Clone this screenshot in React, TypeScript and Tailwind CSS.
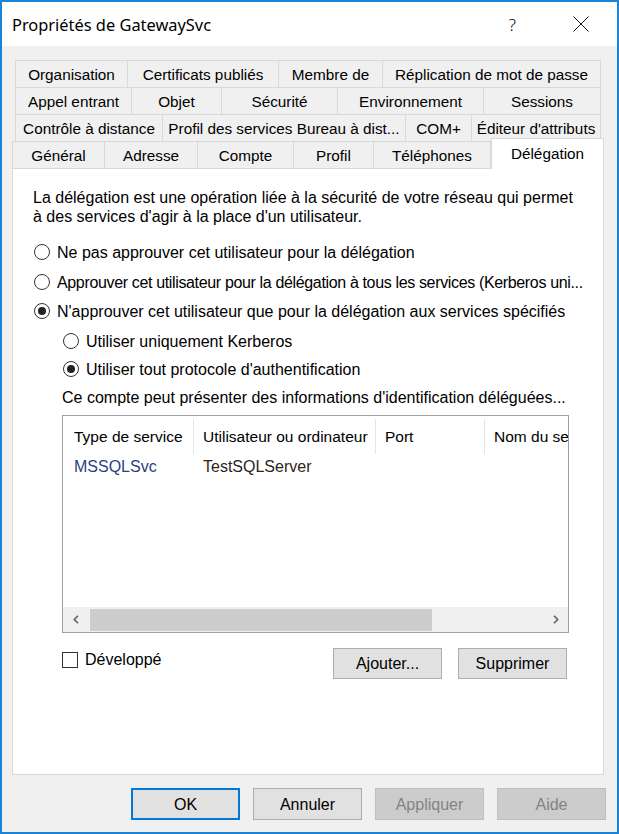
const tabRows: [string, number][][] = [
  [["Organisation", 113], ["Certificats publiés", 151], ["Membre de", 104], ["Réplication de mot de passe", 218]],
  [["Appel entrant", 117], ["Objet", 90], ["Sécurité", 116], ["Environnement", 146], ["Sessions", 117]],
  [["Contrôle à distance", 148], ["Profil des services Bureau à dist...", 243], ["COM+", 66], ["Éditeur d'attributs", 129]],
];

const frontRow: [string, number][] = [
  ["Général", 93],
  ["Adresse", 93],
  ["Compte", 96],
  ["Profil", 80],
  ["Téléphones", 117],
];

function Radio({ checked, label, tight }: { checked?: boolean; label: string; tight?: boolean }) {
  return (
    <div className="flex h-[20px] items-center">
      <span className="flex h-[16px] w-[16px] shrink-0 items-center justify-center rounded-full border border-[#333] bg-white">
        {checked && <span className="h-[8px] w-[8px] rounded-full bg-[#222]" />}
      </span>
      <span className={tight ? "ml-[7px] whitespace-nowrap tracking-[-0.35px]" : "ml-[7px] whitespace-nowrap"}>
        {label}
      </span>
    </div>
  );
}

function Button({ label, primary, disabled }: { label: string; primary?: boolean; disabled?: boolean }) {
  return (
    <div
      className={
        primary
          ? "flex h-[32px] w-[109px] items-center justify-center border-2 border-[#0078d7] bg-[#e1e1e1]"
          : disabled
          ? "flex h-[32px] w-[109px] items-center justify-center border border-[#bfbfbf] bg-[#cccccc] text-[#838383]"
          : "flex h-[32px] w-[109px] items-center justify-center border border-[#adadad] bg-[#e1e1e1]"
      }
    >
      {label}
    </div>
  );
}

export default function App() {
  return (
    <div
      className="flex h-[834px] w-[619px] flex-col border-2 border-[#1883d7] bg-[#f0f0f0] text-[15px] leading-[19px] text-black"
      style={{ fontFamily: '"Liberation Sans", Arial, sans-serif' }}
    >
      {/* title bar */}
      <div className="flex h-[44px] shrink-0 items-center bg-white pl-[10px]">
        <span className="text-[16.4px]" style={{ fontFamily: '"Noto Sans", sans-serif' }}>
          Propriétés de GatewaySvc
        </span>
        <span className="ml-auto mr-[57px] text-[17px] font-light" style={{ fontFamily: '"Noto Sans", sans-serif' }}>
          ?
        </span>
        <svg className="mr-[28px] h-[16px] w-[16px]" viewBox="0 0 16 16" fill="none" stroke="#111" strokeWidth="1">
          <path d="M0.5 0.5 L15.5 15.5 M15.5 0.5 L0.5 15.5" />
        </svg>
      </div>

      <div className="flex flex-col pl-[10px] pt-[14px]">
        {/* tab rows */}
        {tabRows.map((row, i) => (
          <div key={i} className="ml-[3px] flex h-[27px] text-[15.3px]">
            {row.map(([label, w], j) => (
              <div
                key={label}
                className={
                  j === 0
                    ? "flex items-center justify-center whitespace-nowrap border-l border-r border-t border-[#d9d9d9]"
                    : "flex items-center justify-center whitespace-nowrap border-r border-t border-[#d9d9d9]"
                }
                style={{ width: w }}
              >
                {label}
              </div>
            ))}
          </div>
        ))}
        <div className="flex h-[27px] items-end text-[15.3px]">
          {frontRow.map(([label, w], j) => (
            <div
              key={label}
              className={
                j === 0
                  ? "flex h-[27px] items-center justify-center border-l border-r border-t border-[#d9d9d9]"
                  : "flex h-[27px] items-center justify-center border-r border-t border-[#d9d9d9]"
              }
              style={{ width: w }}
            >
              {label}
            </div>
          ))}
          <div className="relative z-10 -mb-px flex h-[31px] w-[113px] justify-center border-l border-r border-t border-[#d9d9d9] bg-white pt-[5px]">
            Délégation
          </div>
        </div>

        {/* tab panel */}
        <div className="flex h-[607px] w-[592px] flex-col border border-[#d9d9d9] bg-white pl-[20px] pt-[19px] text-[16px]">
          <p>
            La délégation est une opération liée à la sécurité de votre réseau qui permet
            <br />à des services d'agir à la place d'un utilisateur.
          </p>

          <div className="mt-[16px] flex flex-col pl-px">
            <Radio label="Ne pas approuver cet utilisateur pour la délégation" />
            <div className="mt-[10px]">
              <Radio tight label="Approuver cet utilisateur pour la délégation à tous les services (Kerberos uni..." />
            </div>
            <div className="mt-[9px]">
              <Radio checked label="N'approuver cet utilisateur que pour la délégation aux services spécifiés" />
            </div>
            <div className="ml-[29px] mt-[10px]">
              <Radio label="Utiliser uniquement Kerberos" />
            </div>
            <div className="ml-[29px] mt-[8px]">
              <Radio checked label="Utiliser tout protocole d'authentification" />
            </div>
          </div>

          <div className="ml-[29px] flex w-[507px] flex-col">
            <div className="mt-[9px] h-[20px] whitespace-nowrap leading-[20px]">
              Ce compte peut présenter des informations d'identification déléguées...
            </div>

            {/* list view */}
            <div className="mt-[7px] flex h-[218px] flex-col overflow-hidden border border-[#a0a0a0]">
              <div className="flex h-[40px] shrink-0 items-center whitespace-nowrap text-[15.5px]">
                <div className="w-[130px] pl-[11px]">Type de service</div>
                <div className="h-[35px] w-px bg-[#e5e5e5]" />
                <div className="w-[181px] pl-[9px]">Utilisateur ou ordinateur</div>
                <div className="h-[35px] w-px bg-[#e5e5e5]" />
                <div className="w-[108px] pl-[9px]">Port</div>
                <div className="h-[35px] w-px bg-[#e5e5e5]" />
                <div className="flex-1 overflow-hidden pl-[9px]">Nom du se</div>
              </div>
              <div className="flex h-[21px] items-center whitespace-nowrap">
                <div className="w-[131px] pl-[11px] text-[#2b3f80]">MSSQLSvc</div>
                <div className="pl-[9px] text-[#2e241c]">TestSQLServer</div>
              </div>
              <div className="flex-1" />
              <div className="flex h-[25px] shrink-0 items-center bg-[#f0f0f0]">
                <div className="flex h-full w-[25px] items-center justify-center">
                  <svg width="6" height="9" viewBox="0 0 6 9" fill="none" stroke="#606060" strokeWidth="1.6">
                    <path d="M5 0.8 L1.3 4.5 L5 8.2" />
                  </svg>
                </div>
                <div className="ml-[2px] h-[22px] w-[342px] bg-[#cdcdcd]" />
                <div className="flex-1" />
                <div className="flex h-full w-[25px] items-center justify-center">
                  <svg width="6" height="9" viewBox="0 0 6 9" fill="none" stroke="#606060" strokeWidth="1.6">
                    <path d="M1 0.8 L4.7 4.5 L1 8.2" />
                  </svg>
                </div>
              </div>
            </div>

            <div className="mt-[15px] flex items-start">
              <div className="mt-[2px] flex items-center">
                <span className="h-[16px] w-[16px] border border-[#333] bg-white" />
                <span className="ml-[7px]">Développé</span>
              </div>
              <div className="ml-auto mr-[2px] flex gap-[16px]">
                <div className="flex h-[31px] w-[109px] items-center justify-center border border-[#adadad] bg-[#e1e1e1]">
                  Ajouter...
                </div>
                <div className="flex h-[31px] w-[109px] items-center justify-center border border-[#adadad] bg-[#e1e1e1]">
                  Supprimer
                </div>
              </div>
            </div>
          </div>
        </div>
      </div>

      {/* dialog buttons */}
      <div className="mt-[13px] flex gap-[13px] pl-[129px] text-[16px]">
        <Button label="OK" primary />
        <Button label="Annuler" />
        <Button label="Appliquer" disabled />
        <Button label="Aide" disabled />
      </div>
    </div>
  );
}
